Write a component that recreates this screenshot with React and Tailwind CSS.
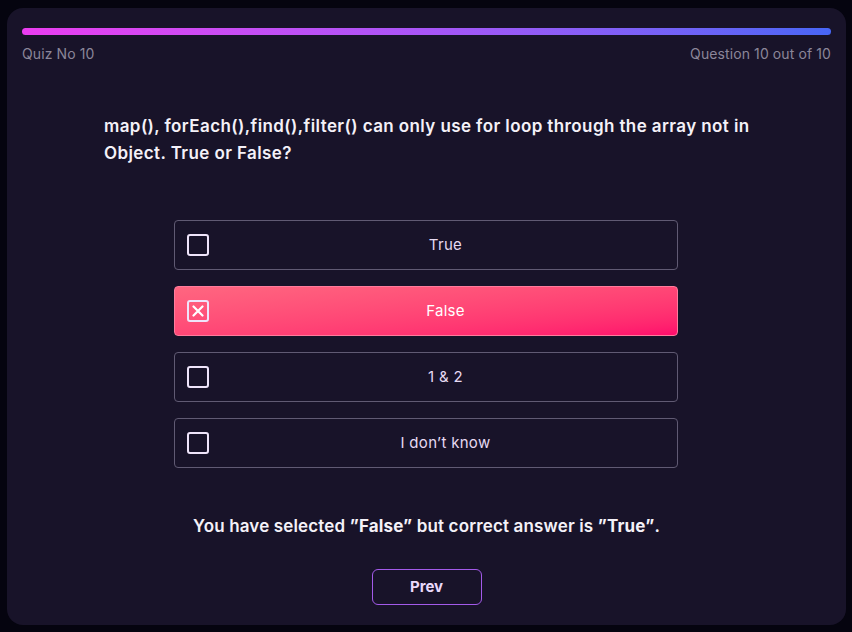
import { useState } from 'react';

const options = ['True', 'False', '1 & 2', "I don’t know"];

function CheckBox({ checked }) {
  return (
    <span className="flex h-[22px] w-[22px] shrink-0 items-center justify-center rounded-[3px] border-2 border-[#efe4fa]">
      {checked && (
        <svg width="12" height="12" viewBox="0 0 12 12" fill="none">
          <path d="M1.5 1.5 L10.5 10.5 M10.5 1.5 L1.5 10.5" stroke="#ffffff" strokeWidth="2.2" strokeLinecap="round" />
        </svg>
      )}
    </span>
  );
}

export default function App() {
  const [selected, setSelected] = useState(1);

  return (
    <div className="min-h-screen bg-[#05040f] pl-[7px] pt-2 font-['Inter','Liberation_Sans',sans-serif]">
      <div className="flex h-[617px] w-[839px] flex-col rounded-2xl bg-[#181329] px-[15px] pt-5">
        <div className="h-[7px] w-full rounded-full bg-gradient-to-r from-[#ea3cf0] via-[#a855f7] to-[#4766f6]" />
        <div className="mt-[9px] flex justify-between text-[14px] leading-5 tracking-[0.1px] text-[#8b8699]">
          <span>Quiz No 10</span>
          <span>Question 10 out of 10</span>
        </div>

        <p className="ml-[82px] mt-[49px] w-[665px] text-[17px] font-semibold leading-[27px] tracking-[0.4px] text-[#f4f1f8]">
          map(), forEach(),find(),filter() can only use for loop through the array not in Object. True or False?
        </p>

        <div className="ml-[152px] mt-[53px] flex w-[504px] flex-col gap-4">
          {options.map((opt, i) => {
            const active = selected === i;
            return (
              <button
                key={opt}
                onClick={() => setSelected(i)}
                className={
                  active
                    ? 'flex h-[50px] items-center gap-[5px] rounded-[4px] border border-[#ff7b9c] bg-gradient-to-br from-[#ff6680] to-[#ff0a6c] pl-3 text-[15px] tracking-[0.3px] text-white'
                    : 'flex h-[50px] items-center gap-[5px] rounded-[4px] border border-[#605a73] bg-transparent pl-3 text-[15px] tracking-[0.3px] text-[#e6daf2]'
                }
              >
                <CheckBox checked={active} />
                <span className="flex-1 text-center">{opt}</span>
              </button>
            );
          })}
        </div>

        <p className="mt-[46px] text-center text-[17px] font-semibold leading-6 tracking-[0.15px] text-[#f4f1f8]">
          You have selected <span className="font-bold">”False”</span> but correct answer is{' '}
          <span className="font-bold">”True”</span>.
        </p>

        <div className="mt-[31px] flex justify-center">
          <button className="h-[36px] w-[110px] rounded-md border border-[#a35ae9] text-[15px] font-bold text-[#ead9fb]">
            Prev
          </button>
        </div>
      </div>
    </div>
  );
}
